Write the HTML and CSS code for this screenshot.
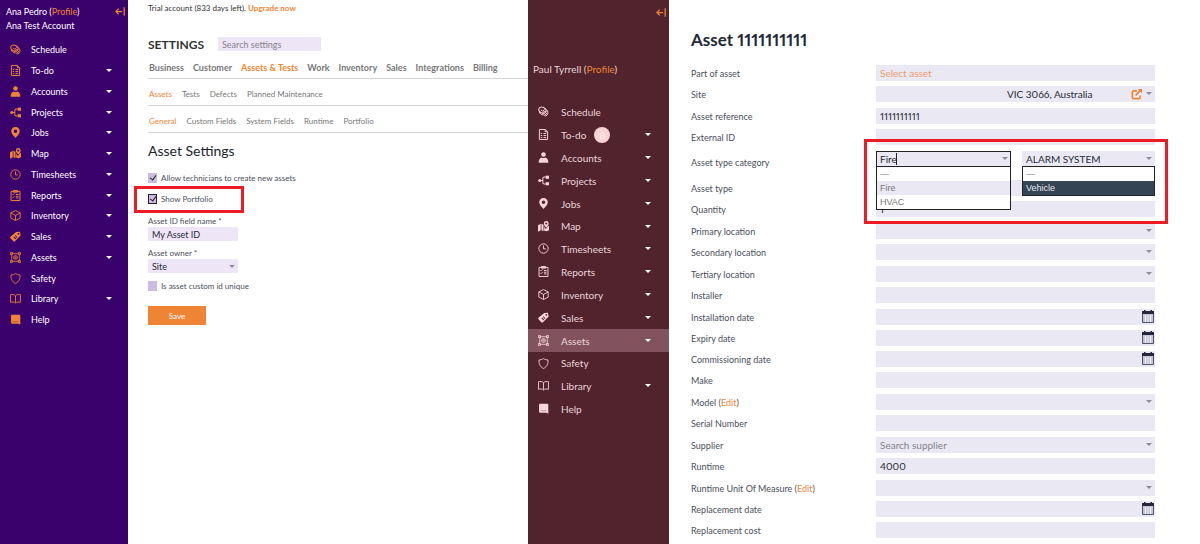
FILE: index.html
```
<!DOCTYPE html>
<html lang="en">
<head>
  <meta charset="UTF-8">
  <title>Asset Settings</title>
  <link rel="stylesheet" href="styles.css">
</head>
<body>
  <!-- Icons -->
  <svg class="icon-defs" width="0" height="0" aria-hidden="true">
    <symbol id="i-schedule" viewBox="0 0 16 16"><g fill="none" stroke="currentColor" stroke-width="1.4"><ellipse cx="6.5" cy="6" rx="5.5" ry="4.2" transform="rotate(25 6.5 6)"/><path d="M2 8.500c.5 3 3 4 5 4.500M12 5c3 2 3 6 1 8.500-2 1.500-5 .5-6-1.500s1-5 5-4"/><path d="M4 5.500l2.500 2L10 5M9 11l2 1.500 2-2.500"/></g></symbol>
    <symbol id="i-todo" viewBox="0 0 16 16"><g fill="none" stroke="currentColor" stroke-width="1.4"><path d="M2 .7h8.500L14 4v11.300H2zM10.500 .7V4H14"/><path d="M4 6.500h2M8 6.500h4M4 9.500h2M8 9.500h4M4 12.500h2M8 12.500h4"/></g></symbol>
    <symbol id="i-accounts" viewBox="0 0 16 16"><g fill="currentColor"><circle cx="8" cy="3.500" r="3.300"/><path d="M1 15.500c-.5-4 2-7 4.500-7.500 1.500 1 3.500 1 5 0 2.500.5 5 3.500 4.500 7.500z"/></g></symbol>
    <symbol id="i-projects" viewBox="0 0 16 16"><g fill="currentColor"><circle cx="2.500" cy="8" r="2.200"/><rect x="11" y="1" width="5" height="4.500"/><rect x="11" y="10.500" width="5" height="4.500"/></g><path d="M4 8h3M11 3H9a2 2 0 0 0-2 2v6a2 2 0 0 0 2 2h2" fill="none" stroke="currentColor" stroke-width="1.500"/></symbol>
    <symbol id="i-jobs" viewBox="0 0 16 16"><path fill="currentColor" fill-rule="evenodd" d="M8 0a6 6 0 0 1 6.200 6c0 4-4.200 7-6.200 10C6 13 1.800 10 1.800 6A6 6 0 0 1 8 0zm0 3.500a2.600 2.600 0 1 0 0 5.200 2.600 2.600 0 0 0 0-5.200z"/></symbol>
    <symbol id="i-map" viewBox="0 0 16 16"><path fill="currentColor" d="M0 6l4-2v9.500L0 15.500zM5 4l3 1.500V15l-3-1.500zM9 8l2.500 3.500L14 8l2-1v6.500L12.500 15 9 14z"/><path fill="currentColor" fill-rule="evenodd" d="M12 0a3.500 3.500 0 0 1 3.500 3.500c0 2.500-2 4-3.500 6-1.500-2-3.500-3.500-3.500-6A3.500 3.500 0 0 1 12 0zm0 2a1.500 1.500 0 1 0 0 3 1.500 1.500 0 0 0 0-3z"/></symbol>
    <symbol id="i-timesheets" viewBox="0 0 16 16"><g fill="none" stroke="currentColor" stroke-width="1.300"><circle cx="8" cy="8" r="6.800"/><path d="M8 3.500V8.500h3.500"/></g></symbol>
    <symbol id="i-reports" viewBox="0 0 16 16"><g fill="none" stroke="currentColor" stroke-width="1.400"><path d="M1.500 2h13v13.300h-13zM5 .7h6v2.500H5z"/><path d="M3.500 6l1 1 2-2M8.500 6.500h4M3.500 10l1 1 2-2M8.500 9h4M8.500 11.500h4"/></g></symbol>
    <symbol id="i-inventory" viewBox="0 0 16 16"><g fill="none" stroke="currentColor" stroke-width="1.300" stroke-linejoin="round"><path d="M8 .8l6.800 3.400v7.600L8 15.200l-6.800-3.400V4.200z"/><path d="M1.200 4.200L8 8l6.800-3.800M8 8v7"/></g></symbol>
    <symbol id="i-sales" viewBox="0 0 16 16"><path fill="currentColor" fill-rule="evenodd" d="M9 1.500l5.500-.5 1 5.500-8 8c-1 1-2 1-3 0l-3.500-3.500c-1-1-1-2 0-3zM12.200 2.800a1.300 1.300 0 1 0 0 2.600 1.300 1.300 0 0 0 0-2.600zM5 9l3 3 1-1-3-3zM7 7l3 3 .8-.8-3-3z"/></symbol>
    <symbol id="i-assets" viewBox="0 0 16 16"><g fill="none" stroke="currentColor" stroke-width="1.200"><path d="M2.500 2.500h11v11h-11z"/><path d="M.6 .6h3v3h-3zM12.400 .6h3v3h-3zM.6 12.400h3v3h-3zM12.400 12.400h3v3h-3z"/><circle cx="8" cy="8" r="2.800"/><circle cx="8" cy="8" r="1"/></g></symbol>
    <symbol id="i-safety" viewBox="0 0 16 16"><path fill="none" stroke="currentColor" stroke-width="1.300" d="M8 .8c2 1.500 4.200 2 6.500 2 .5 5-1 9.500-6.500 12.500C2.500 12.300 1 7.800 1.500 2.800c2.300 0 4.500-.5 6.500-2z"/></symbol>
    <symbol id="i-library" viewBox="0 0 16 16"><path fill="none" stroke="currentColor" stroke-width="1.300" d="M8 4v10M8 4C6 2 3 2 .8 2.500v11C3 13 6 12.500 8 14.500c2-2 5-1.500 7.200-1v-11C13 2 10 2 8 4z"/></symbol>
    <symbol id="i-help" viewBox="0 0 16 16"><path fill="currentColor" d="M3 1h10.500c1 0 1.500.5 1.500 1.500V15.500L12.500 14H3c-1 0-1.500-.5-1.500-1.500v-10C1.500 1.500 2 1 3 1z"/><path d="M4 10.500c2.500 1.500 5.500 1.500 8 0" fill="none" stroke="#000" stroke-opacity=".4" stroke-width="1"/></symbol>
    <symbol id="i-collapse" viewBox="0 0 12 10"><path fill="none" stroke="currentColor" stroke-width="1.500" d="M8.500 5H1M4.500 1.500L1 5l3.500 3.500M11 0v10"/></symbol>
    <symbol id="i-open" viewBox="0 0 12 12"><path fill="none" stroke="currentColor" stroke-width="1.800" d="M6.500 2H3a1.500 1.500 0 0 0-1.500 1.500V9A1.500 1.500 0 0 0 3 10.500h5.500A1.500 1.500 0 0 0 10 9V7M5 7l5.500-5.500"/><path fill="currentColor" d="M7.500 0H12v4.500z"/></symbol>
    <symbol id="i-calendar" viewBox="0 0 12 13"><path fill="#c3c4d6" stroke="#50536b" d="M.5 2h11v10.500H.5z"/><path fill="#25283c" d="M0 1h2V0h1.500v1h5V0H10v1h2v3H0z"/><path stroke="#f1f1f8" d="M3.500 5v7M6 5v7M8.500 5v7"/></symbol>
  </svg>

  <div class="page">
    <!-- Settings screen -->
    <div class="screen">
      <aside class="sidebar purple">
        <div class="user">
          <div>Ana Pedro (<a href="#">Profile</a>)</div>
          <div>Ana Test Account</div>
          <button class="collapse" aria-label="Collapse menu"><svg><use href="#i-collapse"/></svg></button>
        </div>
        <ul class="menu">
          <li><svg><use href="#i-schedule"/></svg><a href="#">Schedule</a></li>
          <li class="more"><svg><use href="#i-todo"/></svg><a href="#">To-do</a></li>
          <li class="more"><svg><use href="#i-accounts"/></svg><a href="#">Accounts</a></li>
          <li class="more"><svg><use href="#i-projects"/></svg><a href="#">Projects</a></li>
          <li class="more"><svg><use href="#i-jobs"/></svg><a href="#">Jobs</a></li>
          <li class="more"><svg><use href="#i-map"/></svg><a href="#">Map</a></li>
          <li class="more"><svg><use href="#i-timesheets"/></svg><a href="#">Timesheets</a></li>
          <li class="more"><svg><use href="#i-reports"/></svg><a href="#">Reports</a></li>
          <li class="more"><svg><use href="#i-inventory"/></svg><a href="#">Inventory</a></li>
          <li class="more"><svg><use href="#i-sales"/></svg><a href="#">Sales</a></li>
          <li class="more"><svg><use href="#i-assets"/></svg><a href="#">Assets</a></li>
          <li><svg><use href="#i-safety"/></svg><a href="#">Safety</a></li>
          <li class="more"><svg><use href="#i-library"/></svg><a href="#">Library</a></li>
          <li><svg><use href="#i-help"/></svg><a href="#">Help</a></li>
        </ul>
      </aside>

      <main class="settings">
        <p class="trial">Trial account (833 days left). <a href="#">Upgrade now</a></p>
        <div class="heading">
          <h1>SETTINGS</h1>
          <input type="text" placeholder="Search settings" aria-label="Search settings">
        </div>
        <nav class="tabs main-tabs">
          <a href="#">Business</a>
          <a href="#">Customer</a>
          <a href="#" class="active">Assets &amp; Tests</a>
          <a href="#">Work</a>
          <a href="#">Inventory</a>
          <a href="#">Sales</a>
          <a href="#">Integrations</a>
          <a href="#">Billing</a>
        </nav>
        <nav class="tabs">
          <a href="#" class="active">Assets</a>
          <a href="#">Tests</a>
          <a href="#">Defects</a>
          <a href="#">Planned Maintenance</a>
        </nav>
        <nav class="tabs">
          <a href="#" class="active">General</a>
          <a href="#">Custom Fields</a>
          <a href="#">System Fields</a>
          <a href="#">Runtime</a>
          <a href="#">Portfolio</a>
        </nav>

        <h2>Asset Settings</h2>
        <form class="settings-form">
          <label class="check"><input type="checkbox" checked> Allow technicians to create new assets</label>
          <label class="check marked"><input type="checkbox" checked> Show Portfolio</label>
          <label class="caption" for="id-name">Asset ID field name *</label>
          <input class="field" type="text" id="id-name" value="My Asset ID">
          <label class="caption" for="owner">Asset owner *</label>
          <div class="select">
            <select class="field" id="owner"><option>Site</option></select>
          </div>
          <label class="check"><input type="checkbox"> Is asset custom id unique</label>
          <button class="save" type="button">Save</button>
        </form>
      </main>
    </div>

    <!-- Asset screen -->
    <div class="screen">
      <aside class="sidebar maroon">
        <div class="user">
          <div>Paul Tyrrell (<a href="#">Profile</a>)</div>
          <button class="collapse" aria-label="Collapse menu"><svg><use href="#i-collapse"/></svg></button>
        </div>
        <ul class="menu">
          <li><svg><use href="#i-schedule"/></svg><a href="#">Schedule</a></li>
          <li class="more"><svg><use href="#i-todo"/></svg><a href="#">To-do</a><span class="badge">8</span></li>
          <li class="more"><svg><use href="#i-accounts"/></svg><a href="#">Accounts</a></li>
          <li class="more"><svg><use href="#i-projects"/></svg><a href="#">Projects</a></li>
          <li class="more"><svg><use href="#i-jobs"/></svg><a href="#">Jobs</a></li>
          <li class="more"><svg><use href="#i-map"/></svg><a href="#">Map</a></li>
          <li class="more"><svg><use href="#i-timesheets"/></svg><a href="#">Timesheets</a></li>
          <li class="more"><svg><use href="#i-reports"/></svg><a href="#">Reports</a></li>
          <li class="more"><svg><use href="#i-inventory"/></svg><a href="#">Inventory</a></li>
          <li class="more"><svg><use href="#i-sales"/></svg><a href="#">Sales</a></li>
          <li class="more current"><svg><use href="#i-assets"/></svg><a href="#">Assets</a></li>
          <li><svg><use href="#i-safety"/></svg><a href="#">Safety</a></li>
          <li class="more"><svg><use href="#i-library"/></svg><a href="#">Library</a></li>
          <li><svg><use href="#i-help"/></svg><a href="#">Help</a></li>
        </ul>
      </aside>

      <main class="asset">
        <h1>Asset 1111111111</h1>
        <form>
          <div class="rows">
            <div class="row"><label for="part">Part of asset</label><input class="field link" id="part" type="text" value="Select asset"></div>
            <div class="row"><label for="site">Site</label>
              <div class="select">
                <select class="field site" id="site"><option>VIC 3066, Australia</option></select>
                <a class="open" href="#" aria-label="Open site"><svg><use href="#i-open"/></svg></a>
              </div>
            </div>
            <div class="row"><label for="ref">Asset reference</label><input class="field" id="ref" type="text" value="1111111111"></div>
            <div class="row"><label for="ext">External ID</label><input class="field" id="ext" type="text"></div>
            <div class="row category"><label for="cat">Asset type category</label>
              <div class="pair">
                <div class="select">
                  <input class="field typing" id="cat" type="text" value="Fire">
                  <span class="cursor"></span>
                  <ul class="options">
                    <li>—</li>
                    <li class="hover">Fire</li>
                    <li>HVAC</li>
                  </ul>
                </div>
                <div class="select">
                  <select class="field" aria-label="Asset system"><option>ALARM SYSTEM</option></select>
                  <ul class="options">
                    <li>—</li>
                    <li class="chosen">Vehicle</li>
                  </ul>
                </div>
              </div>
            </div>
          </div>
          <div class="rows">
            <div class="row"><label for="type">Asset type</label><input class="field" id="type" type="text"></div>
            <div class="row"><label for="qty">Quantity</label><input class="field" id="qty" type="text" value="1"></div>
            <div class="row"><label for="loc1">Primary location</label><div class="select"><select class="field" id="loc1"></select></div></div>
            <div class="row"><label for="loc2">Secondary location</label><div class="select"><select class="field" id="loc2"></select></div></div>
            <div class="row"><label for="loc3">Tertiary location</label><div class="select"><select class="field" id="loc3"></select></div></div>
            <div class="row"><label for="installer">Installer</label><input class="field" id="installer" type="text"></div>
            <div class="row date"><label for="installed">Installation date</label><input class="field" id="installed" type="text"><svg><use href="#i-calendar"/></svg></div>
            <div class="row date"><label for="expiry">Expiry date</label><input class="field" id="expiry" type="text"><svg><use href="#i-calendar"/></svg></div>
            <div class="row date"><label for="comm">Commissioning date</label><input class="field" id="comm" type="text"><svg><use href="#i-calendar"/></svg></div>
            <div class="row"><label for="make">Make</label><input class="field" id="make" type="text"></div>
            <div class="row"><label for="model">Model (<a href="#">Edit</a>)</label><div class="select"><select class="field" id="model"></select></div></div>
            <div class="row"><label for="serial">Serial Number</label><input class="field" id="serial" type="text"></div>
            <div class="row"><label for="supplier">Supplier</label><div class="select"><input class="field" id="supplier" type="text" placeholder="Search supplier"></div></div>
            <div class="row"><label for="runtime">Runtime</label><input class="field" id="runtime" type="text" value="4000"></div>
            <div class="row"><label for="unit">Runtime Unit Of Measure (<a href="#">Edit</a>)</label><div class="select"><select class="field" id="unit"></select></div></div>
            <div class="row date"><label for="replaced">Replacement date</label><input class="field" id="replaced" type="text"><svg><use href="#i-calendar"/></svg></div>
            <div class="row"><label for="cost">Replacement cost</label><input class="field" id="cost" type="text"></div>
          </div>
        </form>
      </main>
    </div>
  </div>
</body>
</html>
```

FILE: styles.css
```
*, *::before, *::after {
  box-sizing: border-box;
}

body {
  margin: 0;
  font-family: Lato, sans-serif;
  font-size: 8px;
  color: #4a4f5c;
  background: #fff;
}

h1, h2, p, ul {
  margin: 0;
  padding: 0;
}

ul {
  list-style: none;
}

a {
  color: #ee8434;
  text-decoration: none;
}

input, select, button {
  font-family: inherit;
  border: none;
  border-radius: 0;
  outline: none;
  margin: 0;
}

.icon-defs {
  position: absolute;
}

.page {
  display: grid;
  grid-template-columns: 44fr 56fr;
  min-height: 100vh;
}

.screen {
  display: flex;
  min-width: 0;
}

/* Sidebars */
.sidebar {
  flex: none;
  font-size: 9px;
}

.user {
  position: relative;
  line-height: 14px;
}

.collapse {
  position: absolute;
  top: 7px;
  right: 3px;
  padding: 0;
  background: none;
  color: #ee8434;
  line-height: 0;
}

.collapse svg {
  width: 10px;
  height: 9px;
}

.menu li {
  display: flex;
  align-items: center;
  height: 21px;
}

.menu li:nth-child(4n) {
  height: 20px;
}

.menu svg {
  width: 11px;
  height: 11px;
}

.menu a {
  color: inherit;
}

.menu .more::after {
  content: "";
  margin-left: auto;
  border: 3px solid transparent;
  border-top-color: #fff;
  border-bottom: none;
}

.purple {
  width: 128px;
  background: #3a006b;
  color: #fff;
}

.purple .user {
  padding: 5px 6px 6px;
}

.purple li {
  padding: 0 16px 0 10px;
}

.purple .menu svg {
  margin-right: 10px;
  color: #ee8434;
}

.maroon {
  width: 141px;
  background: #50232d;
  color: #ecd6da;
  font-size: 10px;
}

.maroon .user {
  padding: 62px 5px 24px;
}

.maroon .collapse {
  top: 8px;
}

.maroon .menu li {
  height: 23px;
  padding: 0 18px 0 10px;
}

.maroon .menu li:nth-child(6n) {
  height: 22px;
}

.maroon .menu svg {
  margin-right: 12px;
  color: #f8d5d8;
}

.maroon .current {
  background: #82535f;
}

.badge {
  width: 16px;
  margin-left: 8px;
  border-radius: 50%;
  background: #f8d3d3;
  color: #fff0f0;
  line-height: 16px;
  text-align: center;
}

/* Settings */
.settings {
  flex: 1;
  min-width: 0;
  padding-left: 20px;
}

.trial {
  padding-top: 3px;
  line-height: 11px;
  color: #333;
}

.trial a {
  font-weight: bold;
}

.heading {
  display: flex;
  align-items: center;
  gap: 14px;
  height: 14px;
  margin-top: 23px;
}

.heading h1 {
  font-size: 12px;
  color: #333;
}

.heading input {
  width: 103px;
  height: 14px;
  padding: 0 4px;
  font-size: 9px;
  background: #eee6f7;
}

::placeholder {
  color: #85818c;
}

.tabs {
  display: flex;
  gap: 10px;
  height: 27px;
  padding: 0 1px;
  border-bottom: 1px solid #d5d5d5;
  line-height: 31px;
  white-space: nowrap;
}

.main-tabs {
  gap: 9px;
  height: 28px;
  font-size: 9px;
  line-height: 34px;
  font-weight: bold;
}

.tabs a {
  color: #777;
}

.tabs a.active {
  color: #ee8434;
}

.settings h2 {
  margin-top: 8px;
  font-size: 14px;
  line-height: 20px;
  font-weight: normal;
  color: #1b2430;
}

.settings-form {
  display: flex;
  flex-direction: column;
  align-items: flex-start;
  padding-top: 12px;
}

.check {
  position: relative;
  display: flex;
  align-items: center;
  gap: 4px;
  height: 10px;
}

.check input {
  appearance: none;
  width: 9px;
  height: 10px;
  background: #cdbbe6;
}

.check input:checked::after {
  content: "";
  display: block;
  width: 4px;
  height: 6px;
  margin: 1px 3px;
  border: solid #222;
  border-width: 0 1px 1px 0;
  transform: rotate(35deg);
}

.marked {
  margin: 11px 0;
}

.marked input {
  border: 1px solid #222;
}

.marked input:checked::after {
  margin: 0 2px;
}

.marked::after {
  content: "";
  position: absolute;
  top: -8px;
  left: -14px;
  width: 110px;
  height: 27px;
  border: 3px solid #ed1c24;
}

.caption {
  line-height: 12px;
}

.field {
  display: block;
  width: 100%;
  height: 16px;
  padding: 0 4px;
  font-size: 10px;
  font-variant-numeric: proportional-nums;
  color: #252a36;
  background: #eae9f3;
  appearance: none;
}

.settings-form .field {
  width: 90px;
  height: 14px;
  margin-bottom: 6px;
  font-size: 9px;
  background: #eee6f7;
}

.select {
  position: relative;
}

.select::after {
  content: "";
  position: absolute;
  top: 6px;
  right: 3px;
  border: 3px solid transparent;
  border-top-color: #8d8b98;
  border-bottom: none;
}

.select + .check {
  margin: 2px 0 15px;
}

.save {
  width: 58px;
  height: 19px;
  background: #ee8434;
  color: #fff;
  font-size: 8px;
}

/* Asset form */
.asset {
  flex: 1;
  min-width: 0;
  padding: 30px 45px 0 22px;
}

.asset h1 {
  margin-bottom: 15px;
  font-size: 17px;
  line-height: 20px;
  font-weight: bold;
  font-variant-numeric: proportional-nums;
  color: #1f2937;
}

.row {
  position: relative;
  display: grid;
  grid-template-columns: 185px 1fr;
  align-items: center;
  height: 16px;
  margin-bottom: 5px;
  font-size: 9px;
}

.row:nth-child(even) {
  margin-bottom: 6px;
}

.row.date {
  margin-bottom: 5px;
}

.row.category {
  height: 24px;
  align-items: start;
}

.category label {
  line-height: 24px;
}

.row > svg {
  position: absolute;
  top: 1px;
  right: 1px;
  width: 12px;
  height: 13px;
}

.link {
  color: #ee9a66;
}

.site {
  padding-left: 131px;
}

.open {
  position: absolute;
  top: 3px;
  right: 13px;
  line-height: 0;
}

.open svg {
  width: 11px;
  height: 11px;
}

.pair {
  position: relative;
  display: grid;
  grid-template-columns: 135px 1fr;
  gap: 11px;
}

.pair::after {
  content: "";
  position: absolute;
  z-index: 3;
  top: -12px;
  left: -12px;
  right: -13px;
  height: 85px;
  border: 3px solid #ed1c24;
}

.typing {
  padding: 0 3px;
  border: 1px solid #222;
}

.cursor {
  position: absolute;
  top: 2px;
  left: 20px;
  width: 1px;
  height: 12px;
  background: #222;
}

.options {
  position: absolute;
  z-index: 2;
  top: 15px;
  left: 0;
  right: 0;
  border: 1px solid #222;
  background: #fff;
  font-family: "Liberation Sans", sans-serif;
  font-size: 9px;
  line-height: 14px;
  color: #777;
}

.options li {
  padding: 0 3px;
}

.options .hover {
  background: #eae9f3;
}

.options .chosen {
  background: #344454;
  color: #e5e8ec;
}
```
